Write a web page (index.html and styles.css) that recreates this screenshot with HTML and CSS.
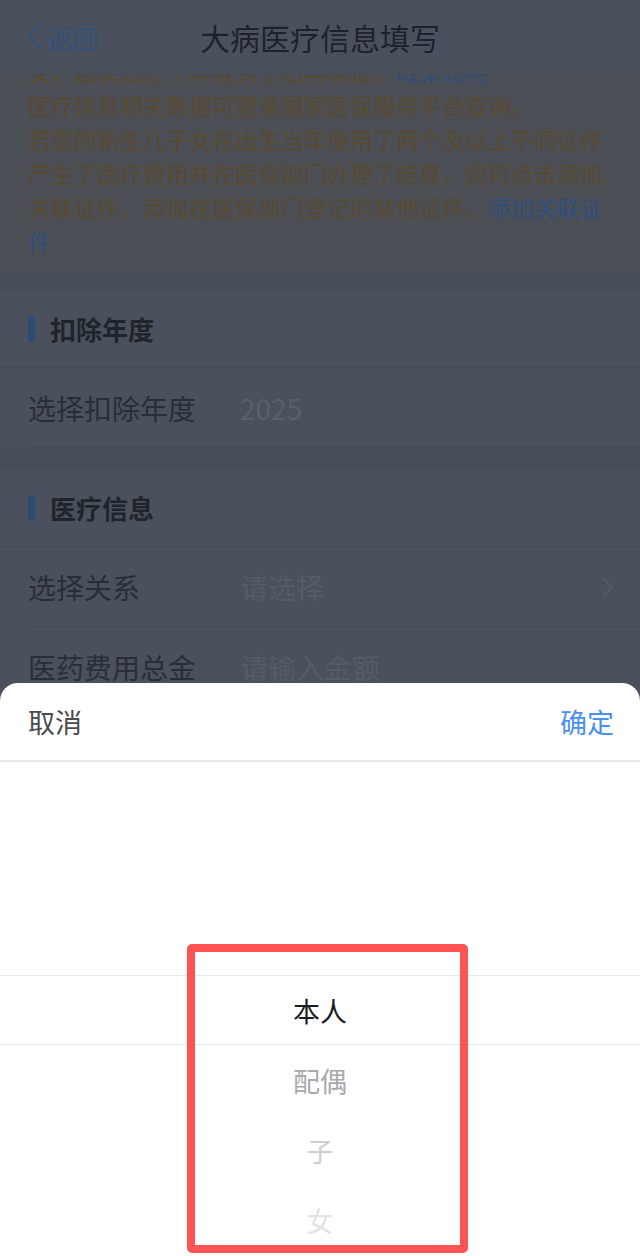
FILE: index.html
```html
<!DOCTYPE html>
<html lang="zh-CN">
<head>
<meta charset="utf-8">
<title>大病医疗信息填写</title>
<link rel="stylesheet" href="styles.css">
</head>
<body>
<div class="page">
  <header class="nav">
    <div class="nav-back">
      <svg class="back-icon" width="16" height="26" viewBox="0 0 16 26"><path d="M13 2 L3 13 L13 24" fill="none" stroke="currentColor" stroke-width="2.2" stroke-linecap="round" stroke-linejoin="round"/></svg>
      <span>返回</span>
    </div>
    <div class="nav-title">大病医疗信息填写</div>
  </header>

  <section class="notice">
    <p class="notice-text">女，建议您在下年度到了后再填报。<span class="link">政策说明</span><br>医疗信息相关数据可登录国家医保服务平台查询。<br>若您的新生儿子女在出生当年使用了两个及以上不同证件产生了医疗费用并在医保部门办理了结算，您可点击添加关联证件，添加在医保部门登记的其他证件。<span class="link">添加关联证件</span></p>
  </section>

  <section class="card first">
    <div class="sec-head"><i class="sec-bar"></i><span>扣除年度</span></div>
    <div class="row">
      <span class="row-label">选择扣除年度</span>
      <span class="row-value">2025</span>
    </div>
  </section>

  <section class="card">
    <div class="sec-head"><i class="sec-bar"></i><span>医疗信息</span></div>
    <div class="row">
      <span class="row-label">选择关系</span>
      <span class="row-value placeholder">请选择</span>
      <svg class="row-arrow" width="12" height="20" viewBox="0 0 12 20"><path d="M2 2 L10 10 L2 18" fill="none" stroke="currentColor" stroke-width="2" stroke-linecap="round" stroke-linejoin="round"/></svg>
    </div>
    <div class="row">
      <span class="row-label">医药费用总金额</span>
      <span class="row-value placeholder">请输入金额</span>
    </div>
  </section>
</div>

<div class="sheet">
  <div class="sheet-head">
    <span class="btn-cancel">取消</span>
    <span class="btn-ok">确定</span>
  </div>
  <div class="picker">
    <div class="pick-item selected">本人</div>
    <div class="pick-item fade1">配偶</div>
    <div class="pick-item fade2">子</div>
    <div class="pick-item fade3">女</div>
  </div>
</div>

<div class="annot"></div>
</body>
</html>
```

FILE: styles.css
```css
* { box-sizing: border-box; }
html, body {
  margin: 0;
  padding: 0;
}
body {
  width: 640px;
  height: 1256px;
  overflow: hidden;
  position: relative;
  font-family: "Noto Sans CJK SC", "Noto Sans", sans-serif;
  background: #484e57;
}
.page {
  display: flex;
  flex-direction: column;
  height: 1256px;
  background: #484e57;
}
.nav {
  height: 75px;
  flex: none;
  background: #4a515c;
  border-bottom: 1px solid #464c56;
  display: flex;
  align-items: center;
  position: relative;
  z-index: 2;
}
.nav-back {
  display: flex;
  align-items: center;
  gap: 5px;
  padding-left: 26px;
  color: #30507d;
  font-size: 26px;
  width: 160px;
}
.back-icon { display: block; }
.nav-title {
  position: absolute;
  left: 0;
  right: 0;
  text-align: center;
  font-size: 30px;
  color: #1e232b;
  pointer-events: none;
}
.notice {
  background: #4d4f56;
  padding: 0 28px 14px;
  overflow: hidden;
  flex: none;
}
.notice-text {
  margin: -21px 0 0;
  font-size: 23px;
  line-height: 34px;
  color: #594a2f;
}
.link { color: #2f4e7c; }
.card {
  background: #4a515c;
  margin-top: 21px;
  flex: none;
}
.card.first { margin-top: 18px; }
.sec-head {
  height: 78px;
  display: flex;
  align-items: center;
  gap: 15px;
  padding-left: 28px;
  border-bottom: 1px solid #454b55;
  font-size: 26px;
  font-weight: 700;
  color: #1f242b;
}
.sec-bar {
  display: block;
  width: 7px;
  height: 26px;
  border-radius: 4px;
  background: #2c4a76;
}
.row {
  height: 80px;
  margin-left: 28px;
  padding-right: 26px;
  display: flex;
  align-items: center;
  border-bottom: 1px solid #454b55;
  font-size: 28px;
  white-space: nowrap;
  overflow: hidden;
}
.row-label {
  width: 169px;
  margin-right: 43px;
  flex: none;
  overflow: hidden;
  color: #292e36;
}
.row-value {
  flex: 1;
  color: #59606a;
}
.row-value.placeholder { color: #555c66; }
.row-arrow { color: #565d68; flex: none; }

.sheet {
  position: absolute;
  left: 0;
  right: 0;
  top: 683px;
  bottom: 0;
  background: #ffffff;
  border-radius: 18px 18px 0 0;
  display: flex;
  flex-direction: column;
  z-index: 3;
}
.sheet-head {
  height: 79px;
  flex: none;
  display: flex;
  justify-content: space-between;
  align-items: center;
  padding: 0 26px 0 28px;
  border-bottom: 2px solid #e6e7ea;
  font-size: 27px;
}
.btn-cancel { color: #4a4a4f; }
.btn-ok { color: #4a8ff0; }
.picker {
  padding-top: 213px;
  display: flex;
  flex-direction: column;
}
.pick-item {
  height: 70px;
  display: flex;
  align-items: center;
  justify-content: center;
  font-size: 27px;
}
.pick-item.selected {
  color: #1b1d22;
  border-top: 1px solid #e8e8e8;
  border-bottom: 1px solid #e8e8e8;
}
.pick-item.fade1 { color: #a9a9ab; }
.pick-item.fade2 { color: #cdcdcf; }
.pick-item.fade3 { color: #e3e3e5; }

.annot {
  position: absolute;
  left: 187px;
  top: 944px;
  width: 281px;
  height: 309px;
  border: 8px solid #fd5353;
  border-radius: 5px;
  z-index: 4;
}
```
